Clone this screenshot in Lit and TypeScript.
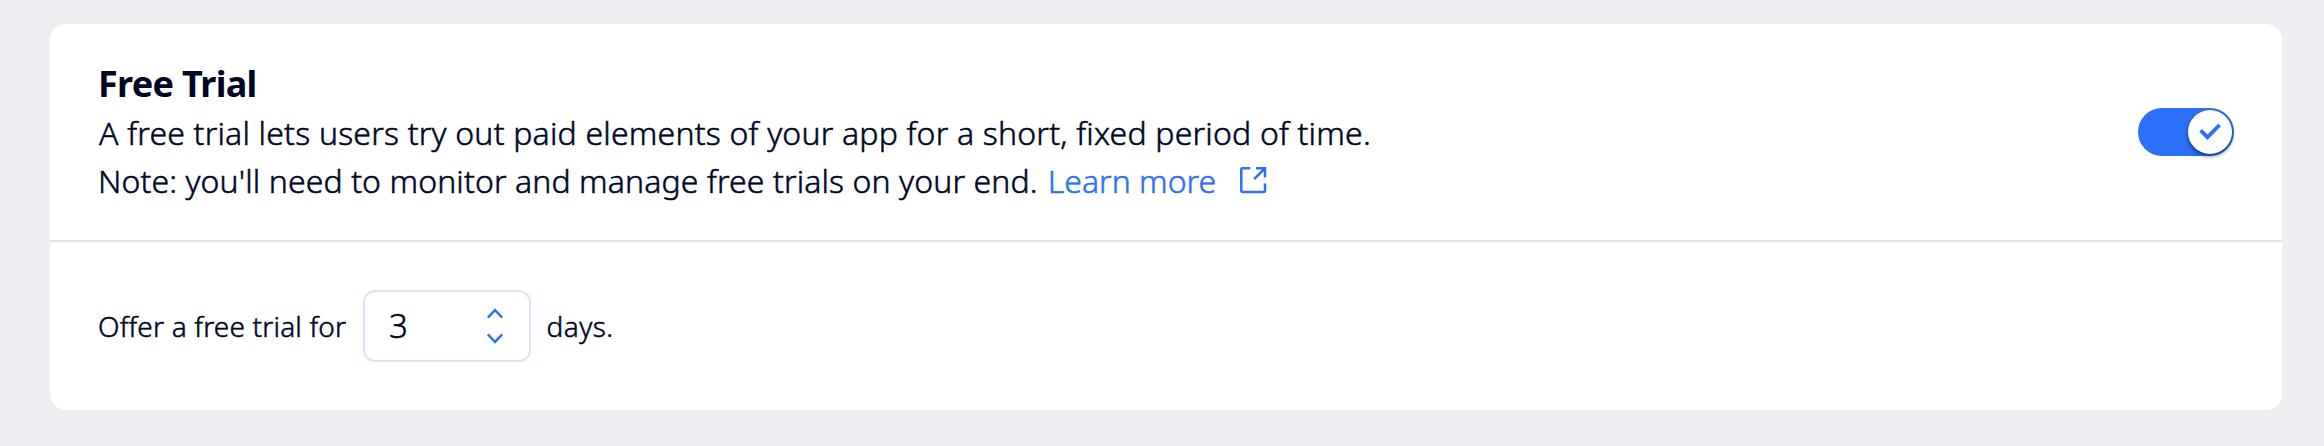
import { LitElement, html, css } from "lit";
import { customElement, property } from "lit/decorators.js";

@customElement("toggle-switch")
class ToggleSwitch extends LitElement {
  static styles = css`
    :host { display: block; flex: none; }
    .track { box-sizing: border-box; width: 96px; height: 48px; padding: 2px; border-radius: 24px; background: #2b70f6; display: flex; justify-content: flex-end; }
    .knob { width: 44px; height: 44px; border-radius: 50%; background: #fff; box-shadow: 0 2px 4px rgba(0, 6, 36, 0.6); }
    svg { display: block; }
  `;
  render() {
    return html`<div class="track" role="switch" aria-checked="true">
      <div class="knob">
        <svg width="44" height="44" viewBox="0 0 44 44" fill="none" stroke="#2b70f6" stroke-width="3.8">
          <path d="M12.6 20.4 19.5 27.2 31.6 15" />
        </svg>
      </div>
    </div>`;
  }
}

@customElement("number-input")
class NumberInput extends LitElement {
  @property({ type: Number }) value = 0;
  static styles = css`
    :host { display: block; flex: none; }
    .box { box-sizing: border-box; width: 168px; height: 72px; border: 2px solid #d7e4fd; border-radius: 12px; display: flex; align-items: center; justify-content: space-between; padding: 0 26px 0 24px; background: #fff; }
    .value { font-size: 33px; line-height: 48px; }
    .steps { display: flex; flex-direction: column; gap: 14px; }
    svg { display: block; }
  `;
  render() {
    return html`<div class="box">
      <span class="value">${this.value}</span>
      <div class="steps">
        <svg width="16" height="11" viewBox="0 0 16 11" fill="none" stroke="#2b70f6" stroke-width="2.4"><path d="M.8 9.6 8 2.1 15.2 9.6" /></svg>
        <svg width="16" height="11" viewBox="0 0 16 11" fill="none" stroke="#2b70f6" stroke-width="2.4"><path d="M.8 1.4 8 8.9 15.2 1.4" /></svg>
      </div>
    </div>`;
  }
}

@customElement("app-root")
class AppRoot extends LitElement {
  static styles = css`
    :host { display: block; box-sizing: border-box; height: 446px; padding: 24px 42px 36px 50px; background: #eceef2; color: #000624; font-family: "Noto Sans", sans-serif; font-weight: 300; -webkit-text-stroke-width: 0.5px; }
    .card { height: 386px; border-radius: 16px; background: #fff; overflow: hidden; }
    .header { box-sizing: border-box; height: 218px; padding: 36px 48px; border-bottom: 2px solid #dfe5eb; display: flex; align-items: center; justify-content: space-between; white-space: nowrap; }
    .text { padding-top: 2px; }
    .title { margin: 0 0 2px; font-size: 36px; line-height: 46px; font-weight: 700; letter-spacing: -0.7px; -webkit-text-stroke-width: 0; }
    .line { padding-left: 1px; font-size: 32px; line-height: 48px; letter-spacing: 0.19px; }
    .note { padding-left: 0; display: flex; letter-spacing: 0.1px; }
    .copy { width: 949.8px; }
    .link { display: flex; color: #2b70f6; text-decoration: none; letter-spacing: 0; }
    .linktext { width: 192.2px; }
    .icon { display: block; margin-top: 10px; }
    .offer { box-sizing: border-box; height: 168px; padding: 48px; display: flex; align-items: center; white-space: nowrap; font-size: 28px; line-height: 36px; }
    .label { width: 265px; letter-spacing: 0.18px; }
    .unit { margin-left: 15.5px; letter-spacing: 0.45px; }
  `;
  render() {
    return html`<section class="card">
      <div class="header">
        <div class="text">
          <h2 class="title">Free Trial</h2>
          <div class="line">A free trial lets users try out paid elements of your app for a short, fixed period of time.</div>
          <div class="line note"><span class="copy">Note: you'll need to monitor and manage free trials on your end.</span><a class="link" href="#"><span class="linktext">Learn more</span><svg class="icon" width="27" height="27" viewBox="0 0 27 27" fill="none" stroke="#2b70f6" stroke-width="2.5"><path d="M10.2 1.3H2.3Q1.3 1.3 1.3 2.3V24Q1.3 25 2.3 25H24Q25 25 25 24V16.4" /><path d="M16 1.3H25V10.5M24.6 1.7 14.2 12.2" /></svg></a></div>
        </div>
        <toggle-switch></toggle-switch>
      </div>
      <div class="offer">
        <span class="label">Offer a free trial for</span>
        <number-input .value=${3}></number-input>
        <span class="unit">days.</span>
      </div>
    </section>`;
  }
}
